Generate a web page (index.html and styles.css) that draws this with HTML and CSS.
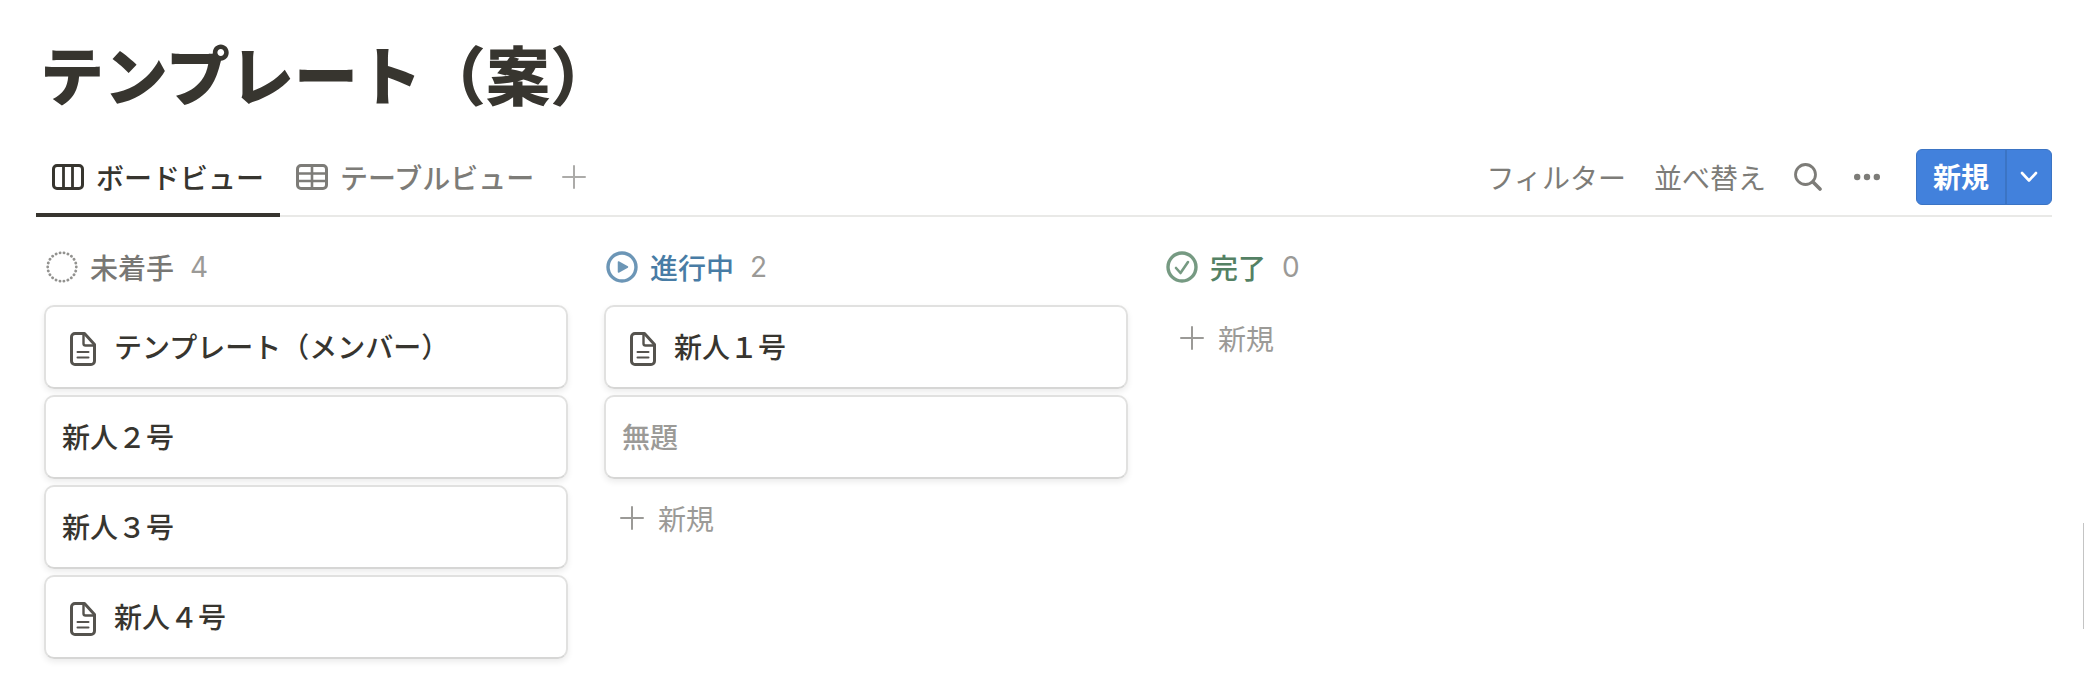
FILE: index.html
```
<!DOCTYPE html>
<html lang="ja">
<head>
    <meta charset="UTF-8">
    <title>テンプレート（案）</title>
    <link rel="stylesheet" href="styles.css">
</head>
<body>
    <!-- shared icons -->
    <svg class="sprite" aria-hidden="true">
        <symbol id="doc" viewBox="0 0 26 34">
            <path d="M5 1.500h9.500L24.500 12.500V29a3.500 3.500 0 0 1-3.500 3.500H5A3.500 3.500 0 0 1 1.500 29V5A3.500 3.500 0 0 1 5 1.500z" fill="none" stroke="currentColor" stroke-width="3" stroke-linejoin="round"/>
            <path d="M13.500 2v9.500a2 2 0 0 0 2 2H24" fill="none" stroke="currentColor" stroke-width="2.400"/>
            <path d="M7.500 20h11M7.500 25.500h11" stroke="currentColor" stroke-width="2" stroke-linecap="round"/>
        </symbol>
        <symbol id="plus" viewBox="0 0 24 24">
            <path d="M12 1v22M1 12h22" stroke="currentColor" stroke-width="2" stroke-linecap="round"/>
        </symbol>
    </svg>

    <h1>テンプレート（案）</h1>

    <div class="toolbar">
        <div class="tabs">
            <button class="tab active">
                <svg class="view-icon" viewBox="0 0 32 26" fill="none" stroke="currentColor"><rect x="1.500" y="1.500" width="29" height="23" rx="3.500" stroke-width="3"/><path d="M11.500 2v22M20.500 2v22" stroke-width="2.800"/></svg>
                ボードビュー
            </button>
            <button class="tab">
                <svg class="view-icon" viewBox="0 0 32 26" fill="none" stroke="currentColor"><rect x="1.500" y="1.500" width="29" height="23" rx="3.500" stroke-width="3"/><path d="M2 9.500h28M2 17h28M16 2v22" stroke-width="2.600"/></svg>
                テーブルビュー
            </button>
            <button class="add-view" aria-label="ビューを追加"><svg class="plus"><use href="#plus"/></svg></button>
        </div>
        <div class="actions">
            <button>フィルター</button>
            <button>並べ替え</button>
            <button aria-label="検索"><svg class="search" viewBox="0 0 28 28" fill="none" stroke="currentColor" stroke-linecap="round"><circle cx="11.500" cy="11.500" r="10" stroke-width="2.800"/><path d="M19 19l7 7" stroke-width="3.600"/></svg></button>
            <button aria-label="その他"><svg class="dots" viewBox="0 0 26 8" fill="currentColor"><circle cx="3.200" cy="4" r="3.200"/><circle cx="13" cy="4" r="3.200"/><circle cx="22.800" cy="4" r="3.200"/></svg></button>
            <div class="new-group">
                <button class="new">新規</button>
                <button class="new-menu" aria-label="新規メニュー"><svg class="chevron" viewBox="0 0 18 12"><path d="M2 2l7 7.500L16 2" fill="none" stroke="currentColor" stroke-width="2.600" stroke-linecap="round" stroke-linejoin="round"/></svg></button>
            </div>
        </div>
    </div>

    <div class="board">
        <section class="column">
            <h2 class="todo">
                <svg class="status" viewBox="0 0 32 32"><circle cx="16" cy="16" r="14.300" fill="none" stroke="currentColor" stroke-width="2.800" stroke-linecap="round" pathLength="88" stroke-dasharray="0.100 3.900"/></svg>
                未着手 <span class="count">4</span>
            </h2>
            <a class="card" href="#"><svg class="doc"><use href="#doc"/></svg>テンプレート（メンバー）</a>
            <a class="card" href="#">新人２号</a>
            <a class="card" href="#">新人３号</a>
            <a class="card" href="#"><svg class="doc"><use href="#doc"/></svg>新人４号</a>
        </section>

        <section class="column">
            <h2 class="doing">
                <svg class="status" viewBox="0 0 32 32"><circle cx="16" cy="16" r="14" fill="none" stroke="currentColor" stroke-width="3.400"/><path d="M12.500 11l9 5-9 5z" fill="currentColor" stroke="currentColor" stroke-width="1.500" stroke-linejoin="round"/></svg>
                進行中 <span class="count">2</span>
            </h2>
            <a class="card" href="#"><svg class="doc"><use href="#doc"/></svg>新人１号</a>
            <a class="card untitled" href="#">無題</a>
            <button class="add-card"><svg class="plus"><use href="#plus"/></svg>新規</button>
        </section>

        <section class="column">
            <h2 class="done">
                <svg class="status" viewBox="0 0 32 32" fill="none" stroke="currentColor"><circle cx="16" cy="16" r="14" stroke-width="3.400"/><path d="M10 17l4.500 5 7.500-11" stroke-width="2.600" stroke-linecap="round" stroke-linejoin="round"/></svg>
                完了 <span class="count">0</span>
            </h2>
            <button class="add-card"><svg class="plus"><use href="#plus"/></svg>新規</button>
        </section>
    </div>

    <div class="scroll-thumb"></div>
</body>
</html>
```
FILE: styles.css
```
* {
    box-sizing: border-box;
}
body {
    position: relative;
    margin: 0;
    padding: 24px 32px 16px 36px;
    background-color: #fff;
    color: #37352f;
    font-family: "Noto Sans CJK JP", sans-serif;
    font-size: 28px;
    line-height: 40px;
}
h1 {
    margin: 0 0 28px;
    padding-left: 4px;
    font-size: 64px;
    line-height: 96px;
    font-weight: 900;
}
h2 {
    display: flex;
    align-items: center;
    gap: 12px;
    height: 40px;
    margin: 0 0 12px;
    font-size: 28px;
    font-weight: 500;
}
svg {
    display: block;
    flex: none;
}
button {
    display: flex;
    align-items: center;
    padding: 0;
    border: none;
    background: none;
    color: inherit;
    font: inherit;
    cursor: pointer;
}
.sprite {
    position: absolute;
    width: 0;
    height: 0;
}

/* view tabs and actions */
.toolbar {
    display: flex;
    justify-content: space-between;
    height: 69px;
    border-bottom: 2px solid #e9e9e7;
}
.tabs {
    display: flex;
}
.tab {
    gap: 12px;
    height: 69px;
    padding: 0 16px 8px;
    border-bottom: 4px solid transparent;
    color: #7d7c78;
    font-weight: 500;
}
.tab.active {
    border-color: #37352f;
    color: #37352f;
}
.view-icon {
    width: 32px;
    height: 26px;
}
.add-view {
    padding: 0 12px 10px;
    color: #acaba9;
}
.plus {
    width: 24px;
    height: 24px;
}
.actions {
    display: flex;
    align-items: center;
    gap: 28px;
    height: 57px;
    color: #7d7c78;
}
.search {
    width: 28px;
    height: 28px;
}
.dots {
    width: 26px;
    height: 8px;
    margin: 0 4px;
}
.new-group {
    display: flex;
    height: 56px;
    margin-left: 4px;
    overflow: hidden;
    border: 1px solid #3b74c4;
    border-radius: 6px;
    background-color: #4281dc;
    color: #fff;
}
.new {
    padding: 0 16px 2px;
    font-weight: 700;
}
.new-menu {
    justify-content: center;
    width: 46px;
    border-left: 2px solid #3b74c4;
}
.chevron {
    width: 18px;
    height: 12px;
}

/* board */
.board {
    display: grid;
    grid-template-columns: repeat(auto-fill, 524px);
    gap: 36px;
    padding: 30px 0 0 8px;
}
.column {
    display: flex;
    flex-direction: column;
    gap: 6px;
}
.column h2 {
    margin-bottom: 12px;
    padding-left: 2px;
}
.status {
    width: 32px;
    height: 32px;
    opacity: 0.8;
}
.count {
    margin-left: 4px;
    color: #9b9a97;
    font-family: Inter, sans-serif;
    font-weight: 400;
}
.todo {
    color: #787774;
}
.doing {
    color: #487ca5;
}
.done {
    color: #548164;
}
.card {
    display: flex;
    align-items: center;
    height: 84px;
    padding: 0 16px 2px;
    border: 2px solid #e1e1e0;
    border-bottom-color: #d6d6d5;
    border-radius: 10px;
    box-shadow: 0 3px 6px rgba(15, 15, 15, 0.08);
    color: #37352f;
    font-weight: 500;
    text-decoration: none;
}
.doc {
    width: 26px;
    height: 34px;
    margin: 6px 18px 0 8px;
    color: #55534e;
}
.untitled {
    color: #9b9a97;
}
.add-card {
    gap: 14px;
    height: 68px;
    padding: 0 16px 2px;
    color: #9b9a97;
}
.scroll-thumb {
    position: absolute;
    top: 523px;
    right: 0;
    width: 1px;
    height: 106px;
    background-color: #c4c4c4;
}
```
